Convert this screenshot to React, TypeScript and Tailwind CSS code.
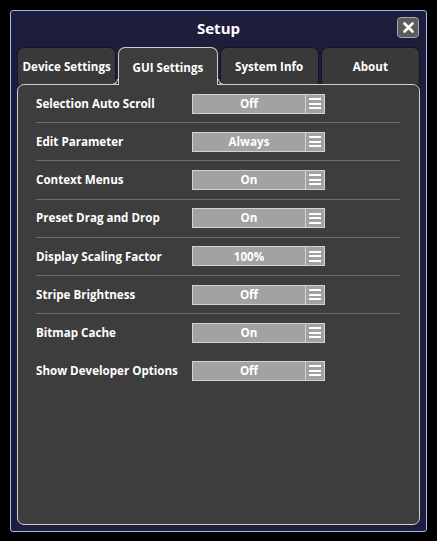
const rows = [
  { label: "Selection Auto Scroll", value: "Off" },
  { label: "Edit Parameter", value: "Always" },
  { label: "Context Menus", value: "On" },
  { label: "Preset Drag and Drop", value: "On" },
  { label: "Display Scaling Factor", value: "100%" },
  { label: "Stripe Brightness", value: "Off" },
  { label: "Bitmap Cache", value: "On" },
  { label: "Show Developer Options", value: "Off" },
];

const tabs = ["Device Settings", "GUI Settings", "System Info", "About"];

const Dropdown = ({ value }: { value: string }) => (
  <div className="flex w-[133px] h-[20px] border border-[#d4d4d4] bg-[#a2a2a2]">
    <div className="flex-1 flex items-center justify-center text-white font-bold text-[11.6px] leading-none">
      {value}
    </div>
    <div className="w-[19px] border-l border-[#d4d4d4] flex flex-col items-center justify-center gap-[2.5px]">
      <span className="block w-[12px] h-[2px] bg-white" />
      <span className="block w-[12px] h-[2px] bg-white" />
      <span className="block w-[12px] h-[2px] bg-white" />
    </div>
  </div>
);

const App = () => {
  const active = 1;

  return (
    <div
      className="w-[437px] h-[541px] bg-black pt-[10px] pl-[10px]"
      style={{ fontFamily: '"Open Sans", "DejaVu Sans", sans-serif' }}
    >
      <div className="w-[417px] h-[522px] border border-[#9fbcf0] rounded-[3px] bg-[#1e1e3c] flex flex-col px-[6px] pb-[6px]">
        {/* header */}
        <div className="relative h-[36px] flex items-center justify-center">
          <span className="text-white font-bold text-[15px] -mt-[1px]">Setup</span>
          <button className="absolute right-[1px] top-[6px] w-[22px] h-[21px] rounded-[4px] border border-[#a8a8a8] bg-[#5c5c5c] flex items-center justify-center">
            <svg width="11" height="11" viewBox="0 0 11 11">
              <path d="M1.5 1.5 L9.5 9.5 M9.5 1.5 L1.5 9.5" stroke="white" strokeWidth="2.6" strokeLinecap="round" />
            </svg>
          </button>
        </div>

        {/* tabs */}
        <div className="grid grid-cols-4 gap-[2px] h-[37px] relative z-10">
          {tabs.map((t, i) =>
            i === active ? (
              <div
                key={t}
                className="relative h-[38px] pt-[2px] rounded-t-[7px] border border-b-0 border-[#cfcfcf] bg-[#3d3d3d] flex items-center justify-center text-white font-bold text-[11.6px]"
              >
                {t}
                <span className="absolute -left-[7px] bottom-0 w-[6px] h-[6px] rounded-br-[6px] border-r border-b border-[#cfcfcf]" />
                <span className="absolute -right-[7px] bottom-0 w-[6px] h-[6px] rounded-bl-[6px] border-l border-b border-[#cfcfcf]" />
              </div>
            ) : (
              <div
                key={t}
                className="h-[37px] pt-[2px] rounded-t-[7px] border border-b-0 border-[#14142a] bg-[#393939] flex items-center justify-center text-white font-bold text-[11.6px]"
              >
                {t}
              </div>
            )
          )}
        </div>

        {/* content */}
        <div className="flex-1 rounded-[7px] border border-[#cfcfcf] bg-[#3d3d3d] pl-[18px] pr-[19px]">
          {rows.map((r, i) => (
            <div
              key={r.label}
              className={
                "flex items-center h-[38.2px] " +
                (i < rows.length - 2 ? "border-b border-[#6e6e6e]" : "border-b border-transparent")
              }
            >
              <span className="w-[156px] text-white font-bold text-[11.6px]">{r.label}</span>
              <Dropdown value={r.value} />
            </div>
          ))}
        </div>
      </div>
    </div>
  );
};

export default App;
